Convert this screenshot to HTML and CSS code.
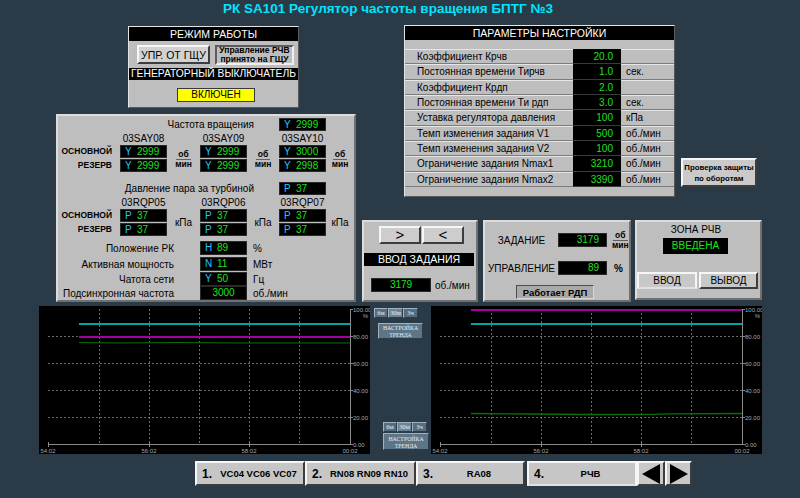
FILE: index.html
```html
<!DOCTYPE html>
<html lang="ru">
<head>
<meta charset="utf-8">
<title>РК SA101</title>
<link rel="stylesheet" href="styles.css">
</head>
<body>
<div class="screen">
  <h1 class="title">РК SA101 Регулятор частоты вращения БПТГ №3</h1>

  <div class="top">
    <div class="left-col">
      <div class="panel bevel mode">
        <div class="hdr h1">РЕЖИМ РАБОТЫ</div>
        <div class="mode-btns">
          <div class="btn raised upr">УПР. ОТ ГЩУ</div>
          <div class="btn sunken ctrl">Управление РЧВ<br>принято на ГЩУ</div>
        </div>
        <div class="hdr h2">ГЕНЕРАТОРНЫЙ ВЫКЛЮЧАТЕЛЬ</div>
        <div class="breaker"><div class="yellow">ВКЛЮЧЕН</div></div>
      </div>

      <div class="panel bevel2 meas">
        <div class="mrow r-title"><div class="t-lbl">Частота вращения</div><div class="val w47"><i>Y</i>2999</div></div>
        <div class="mrow hrow"><span class="c-lbl"></span><span class="c-box">03SAY08</span><span class="c-u1"></span><span class="c-box">03SAY09</span><span class="c-u2"></span><span class="c-box">03SAY10</span></div>
        <div class="mrow grp">
          <div class="c-lbl stack lbls"><span>ОСНОВНОЙ</span><span>РЕЗЕРВ</span></div>
          <div class="c-box stack"><div class="val"><i>Y</i>2999</div><div class="val"><i>Y</i>2999</div></div>
          <div class="c-u1 unit"><span class="frac"><span class="fn">об</span><span>мин</span></span></div>
          <div class="c-box stack"><div class="val"><i>Y</i>2999</div><div class="val"><i>Y</i>2999</div></div>
          <div class="c-u2 unit"><span class="frac"><span class="fn">об</span><span>мин</span></span></div>
          <div class="c-box stack"><div class="val"><i>Y</i>3000</div><div class="val"><i>Y</i>2998</div></div>
          <div class="c-u3 unit"><span class="frac"><span class="fn">об</span><span>мин</span></span></div>
        </div>
        <div class="mrow r-title r-press"><div class="t-lbl">Давление пара за турбиной</div><div class="val w47"><i>P</i>37</div></div>
        <div class="mrow hrow"><span class="c-lbl"></span><span class="c-box">03RQP05</span><span class="c-u1"></span><span class="c-box">03RQP06</span><span class="c-u2"></span><span class="c-box">03RQP07</span></div>
        <div class="mrow grp">
          <div class="c-lbl stack lbls"><span>ОСНОВНОЙ</span><span>РЕЗЕРВ</span></div>
          <div class="c-box stack"><div class="val"><i>P</i>37</div><div class="val"><i>P</i>37</div></div>
          <div class="c-u1 unit">кПа</div>
          <div class="c-box stack"><div class="val"><i>P</i>37</div><div class="val"><i>P</i>37</div></div>
          <div class="c-u2 unit">кПа</div>
          <div class="c-box stack"><div class="val"><i>P</i>37</div><div class="val"><i>P</i>37</div></div>
          <div class="c-u3 unit">кПа</div>
        </div>
        <div class="mrow srow s1"><div class="s-lbl">Положение РК</div><div class="val w47 tall"><i>H</i>89</div><div class="s-unit">%</div></div>
        <div class="mrow srow s2"><div class="s-lbl">Активная мощность</div><div class="val w47 tall"><i>N</i>11</div><div class="s-unit">МВт</div></div>
        <div class="mrow srow s3"><div class="s-lbl">Чатота сети</div><div class="val w47 tall"><i>Y</i>50</div><div class="s-unit">Гц</div></div>
        <div class="mrow srow s4"><div class="s-lbl">Подсинхронная частота</div><div class="val w47 tall center">3000</div><div class="s-unit">об./мин</div></div>
      </div>
    </div>

    <div class="right-col">
      <div class="params-row">
        <div class="panel bevel params">
          <div class="hdr ph">ПАРАМЕТРЫ НАСТРОЙКИ</div>
          <div class="p-gap"></div>
          <div class="prow"><div class="pl">Коэффициент Крчв</div><div class="pv">20.0</div><div class="pu"></div></div>
          <div class="prow"><div class="pl">Постоянная времени Тирчв</div><div class="pv">1.0</div><div class="pu">сек.</div></div>
          <div class="prow"><div class="pl">Коэффициент Крдп</div><div class="pv">2.0</div><div class="pu"></div></div>
          <div class="prow"><div class="pl">Постоянная времени Ти рдп</div><div class="pv">3.0</div><div class="pu">сек.</div></div>
          <div class="prow"><div class="pl">Уставка регулятора давления</div><div class="pv">100</div><div class="pu">кПа</div></div>
          <div class="prow"><div class="pl">Темп изменения задания V1</div><div class="pv">500</div><div class="pu">об./мин</div></div>
          <div class="prow"><div class="pl">Темп изменения задания V2</div><div class="pv">100</div><div class="pu">об./мин</div></div>
          <div class="prow"><div class="pl">Ограничение задания Nmax1</div><div class="pv">3210</div><div class="pu">об./мин</div></div>
          <div class="prow"><div class="pl">Ограничение задания Nmax2</div><div class="pv">3390</div><div class="pu">об./мин</div></div>
        </div>
        <div class="btn raised check">Проверка защиты<br>по оборотам</div>
      </div>

      <div class="ctrl-row">
        <div class="panel bevel2 p4">
          <div class="arrows">
            <div class="btn raised arr">&gt;</div>
            <div class="btn raised arr">&lt;</div>
          </div>
          <div class="hdr bar">ВВОД ЗАДАНИЯ</div>
          <div class="vrow"><div class="val center w60 tall">3179</div><span class="vunit">об./мин</span></div>
        </div>

        <div class="panel bevel2 p5">
          <div class="zrow z1"><div class="z-lbl">ЗАДАНИЕ</div><div class="val right w49 tall">3179</div><span class="frac zf"><span class="fn">об</span><span>мин</span></span></div>
          <div class="zrow z2"><div class="z-lbl">УПРАВЛЕНИЕ</div><div class="val right w49 tall">89</div><span class="pct">%</span></div>
          <div class="btn rdp">Работает РДП</div>
        </div>

        <div class="panel bevel2 p6">
          <div class="zone-t">ЗОНА РЧВ</div>
          <div class="zone-v">ВВЕДЕНА</div>
          <div class="zone-btns">
            <div class="btn lit zb1">ВВОД</div>
            <div class="btn raised zb2">ВЫВОД</div>
          </div>
        </div>
      </div>
    </div>
  </div>

  <div class="trends">
    <div class="chart">
      <svg width="331" height="148" viewBox="0 0 331 148">
        <rect width="331" height="148" fill="#000"/>
        <g stroke="#6a6a6a" stroke-width="1" stroke-dasharray="2 2">
          <line x1="60.5" y1="3" x2="60.5" y2="138"/><line x1="110.5" y1="3" x2="110.5" y2="138"/>
          <line x1="160.5" y1="3" x2="160.5" y2="138"/><line x1="210.5" y1="3" x2="210.5" y2="138"/>
          <line x1="260.5" y1="3" x2="260.5" y2="138"/>
          <line x1="9" y1="30.5" x2="311" y2="30.5"/><line x1="9" y1="57.5" x2="311" y2="57.5"/>
          <line x1="9" y1="84.5" x2="311" y2="84.5"/><line x1="9" y1="111.5" x2="311" y2="111.5"/>
        </g>
        <g stroke="#8a8a8a" stroke-width="1">
          <line x1="311.5" y1="3" x2="311.5" y2="138.5"/><line x1="9" y1="138.5" x2="312" y2="138.5"/>
          <line x1="311" y1="3.5" x2="314" y2="3.5"/><line x1="311" y1="30.5" x2="314" y2="30.5"/>
          <line x1="311" y1="57.5" x2="314" y2="57.5"/><line x1="311" y1="84.5" x2="314" y2="84.5"/>
          <line x1="311" y1="111.5" x2="314" y2="111.5"/><line x1="311" y1="138.5" x2="314" y2="138.5"/>
          <line x1="9.5" y1="136" x2="9.5" y2="141"/><line x1="110.5" y1="136" x2="110.5" y2="141"/>
          <line x1="210.5" y1="136" x2="210.5" y2="141"/>
        </g>
        <line x1="40" y1="18" x2="311" y2="18" stroke="#00a3a8" stroke-width="2"/>
        <line x1="40" y1="31" x2="311" y2="31" stroke="#a300a3" stroke-width="2"/>
        <polyline points="40,36.5 80,37 140,36.5 200,37 311,37" fill="none" stroke="#0a6f0a" stroke-width="1"/>
        <g class="ax" fill="#a8a8a8">
          <text x="314" y="5.5">100.00</text><text x="329" y="12" text-anchor="end">%</text>
          <text x="314" y="32.5">80.00</text><text x="314" y="59.5">60.00</text>
          <text x="314" y="86.5">40.00</text><text x="314" y="113.5">20.00</text>
          <text x="314" y="140.5">0.00</text>
          <text x="9" y="147" text-anchor="middle">54:02</text><text x="110" y="147" text-anchor="middle">56:02</text>
          <text x="210" y="147" text-anchor="middle">58:02</text><text x="311" y="147" text-anchor="middle">00:02</text>
        </g>
      </svg>
    </div>

    <div class="tools">
      <div class="tg1">
        <div class="tbtns"><span class="tb">6м</span><span class="tb tb-on">30м</span><span class="tb">3ч</span></div>
        <div class="tset">НАСТРОЙКА<br>ТРЕНДА</div>
      </div>
      <div class="tg2">
        <div class="tbtns"><span class="tb">6м</span><span class="tb tb-on">30м</span><span class="tb">3ч</span></div>
        <div class="tset tset2">НАСТРОЙКА<br>ТРЕНДА</div>
      </div>
    </div>

    <div class="chart">
      <svg width="331" height="148" viewBox="0 0 331 148">
        <rect width="331" height="148" fill="#000"/>
        <g stroke="#6a6a6a" stroke-width="1" stroke-dasharray="2 2">
          <line x1="60.5" y1="3" x2="60.5" y2="138"/><line x1="110.5" y1="3" x2="110.5" y2="138"/>
          <line x1="160.5" y1="3" x2="160.5" y2="138"/><line x1="210.5" y1="3" x2="210.5" y2="138"/>
          <line x1="260.5" y1="3" x2="260.5" y2="138"/>
          <line x1="9" y1="30.5" x2="311" y2="30.5"/><line x1="9" y1="57.5" x2="311" y2="57.5"/>
          <line x1="9" y1="84.5" x2="311" y2="84.5"/><line x1="9" y1="111.5" x2="311" y2="111.5"/>
        </g>
        <g stroke="#8a8a8a" stroke-width="1">
          <line x1="311.5" y1="3" x2="311.5" y2="138.5"/><line x1="9" y1="138.5" x2="312" y2="138.5"/>
          <line x1="311" y1="3.5" x2="314" y2="3.5"/><line x1="311" y1="30.5" x2="314" y2="30.5"/>
          <line x1="311" y1="57.5" x2="314" y2="57.5"/><line x1="311" y1="84.5" x2="314" y2="84.5"/>
          <line x1="311" y1="111.5" x2="314" y2="111.5"/><line x1="311" y1="138.5" x2="314" y2="138.5"/>
          <line x1="9.5" y1="136" x2="9.5" y2="141"/><line x1="110.5" y1="136" x2="110.5" y2="141"/>
          <line x1="210.5" y1="136" x2="210.5" y2="141"/>
        </g>
        <line x1="40" y1="4" x2="311" y2="4" stroke="#a300a3" stroke-width="2"/>
        <line x1="40" y1="18" x2="311" y2="18" stroke="#00a3a8" stroke-width="2"/>
        <polyline points="40,107.5 100,108 160,108.5 220,108.3 240,107.8 311,107.5" fill="none" stroke="#0a6f0a" stroke-width="1.3"/>
        <g class="ax" fill="#a8a8a8">
          <text x="314" y="5.5">100.00</text><text x="329" y="12" text-anchor="end">%</text>
          <text x="314" y="32.5">80.00</text><text x="314" y="59.5">60.00</text>
          <text x="314" y="86.5">40.00</text><text x="314" y="113.5">20.00</text>
          <text x="314" y="140.5">0.00</text>
          <text x="9" y="147" text-anchor="middle">54:02</text><text x="110" y="147" text-anchor="middle">56:02</text>
          <text x="210" y="147" text-anchor="middle">58:02</text><text x="311" y="147" text-anchor="middle">00:02</text>
        </g>
      </svg>
    </div>
  </div>

  <div class="nav">
    <div class="btn raised nb nb1"><b>1.</b><span>VC04 VC06 VC07</span></div>
    <div class="btn raised nb nb2"><b>2.</b><span>RN08 RN09 RN10</span></div>
    <div class="btn raised nb nb3"><b>3.</b><span>RA08</span></div>
    <div class="btn lit nb nb4"><b>4.</b><span>РЧВ</span></div>
    <div class="btn raised na"><svg width="18" height="20" viewBox="0 0 18 20"><polygon points="18,0 18,20 0,10" fill="#000"/></svg></div>
    <div class="btn raised na na2"><svg width="18" height="20" viewBox="0 0 18 20"><polygon points="0,0 0,20 18,10" fill="#000"/></svg></div>
  </div>
</div>
</body>
</html>
```

FILE: styles.css
```css
* { box-sizing: border-box; }
html, body { margin: 0; padding: 0; }
body {
  width: 800px; height: 498px; overflow: hidden;
  background: #2b3a47;
  font-family: "Liberation Sans", Arial, sans-serif;
  font-size: 10px; color: #000;
}
.title {
  margin: 0; width: 776px; height: 25px;
  text-align: center; font-size: 13.5px; font-weight: bold;
  line-height: 18px; color: #00e4ff;
}

/* ---------- top area ---------- */
.top { display: flex; gap: 6px; padding-left: 56px; height: 277px; }
.left-col { width: 300px; display: flex; flex-direction: column; }
.right-col { width: 400px; display: flex; flex-direction: column; }

.panel { background: #bebebe; }
.bevel { border: 1px solid; border-color: #e4e4e4 #5a5a5a #5a5a5a #e4e4e4; }
.bevel2 { border: 2px solid; border-color: #dcdcdc #707070 #707070 #dcdcdc; }

.hdr { background: #000; color: #fff; text-align: center; font-size: 10.5px; white-space: nowrap; }

.btn { display: flex; align-items: center; justify-content: center; text-align: center; }
.raised { background: #c8c8c8; border: 2px solid; border-color: #f6f6f6 #3c3c3c #3c3c3c #f6f6f6; }
.sunken { border: 2px solid; border-color: #5c5c5c #eeeeee #eeeeee #5c5c5c; }
.lit { background: #c8c8c8; border: 2px solid; border-color: #f6f6f6 #f6f6f6 #e0e0e0 #f6f6f6; }

/* mode panel */
.mode { margin: 1px 0 0 72px; width: 171px; height: 82px; }
.mode .h1 { height: 14px; line-height: 14px; }
.mode .h2 { height: 12px; line-height: 12px; font-size: 10.3px; }
.mode-btns { height: 27px; display: flex; align-items: center; padding-left: 8px; gap: 5px; }
.upr { width: 73px; height: 19px; font-size: 10.5px; background: #d2d2d2; }
.ctrl { width: 79px; height: 20px; font-size: 8.5px; font-weight: bold; line-height: 8.5px; }
.breaker { height: 27px; padding: 8px 0 0 48px; }
.yellow {
  width: 78px; height: 14px; background: #ffff00; border: 1px solid #3a3a3a;
  text-align: center; line-height: 12px; font-size: 10px;
}

/* measurement panel */
.meas { margin-top: 6px; width: 300px; height: 188px; display: flex; flex-direction: column; }
.mrow { display: flex; align-items: center; }
.r-title { margin-top: 2px; height: 13px; }
.r-press { margin-top: 10px; }
.t-lbl { width: 221px; text-align: right; padding-right: 25px; font-size: 10px; }
.hrow { height: 14px; font-size: 10px; }
.hrow span { text-align: center; }
.c-lbl { width: 62px; flex: none; }
.c-box { width: 47px; flex: none; }
.c-u1 { width: 33px; flex: none; }
.c-u2 { width: 32px; flex: none; }
.c-u3 { width: 28px; flex: none; }
.grp { height: 27px; align-items: stretch; }
.stack { display: flex; flex-direction: column; gap: 1px; }
.stack > * { height: 13px; }
.lbls span { text-align: right; padding-right: 8px; font-size: 8.5px; font-weight: bold; line-height: 13px; }
.unit { display: flex; align-items: center; justify-content: center; font-size: 10px; }
.frac { display: inline-flex; flex-direction: column; align-items: center; font-size: 8.5px; font-weight: bold; line-height: 8px; }
.frac .fn { border-bottom: 1px solid #606060; padding: 0 2px 1px; }

.val {
  background: #000; border: 1px solid #2a2a2a;
  height: 13px; line-height: 11px; font-size: 10px;
  color: #1fe01f; white-space: nowrap;
}
.val i { display: inline-block; width: 16px; padding-left: 4px; font-style: normal; color: #1cc8ff; }
.val.tall { height: 14px; line-height: 12px; }
.w47 { width: 47px; flex: none; }
.w49 { width: 49px; flex: none; }
.w60 { width: 60px; flex: none; }
.val.center { text-align: center; }
.val.right { text-align: right; padding-right: 7px; }

.srow { height: 14px; }
.s1 { margin-top: 5px; }
.s2 { margin-top: 2px; }
.s3 { margin-top: 1px; }
.s-lbl { width: 142px; text-align: right; padding-right: 26px; font-size: 10px; }
.s-unit { padding-left: 6px; font-size: 10px; }

/* params panel */
.params-row { display: flex; height: 172px; }
.params { margin-left: 42px; width: 271px; height: 172px; display: flex; flex-direction: column; }
.params .ph { height: 14px; line-height: 14px; }
.p-gap { height: 9px; }
.prow { height: 15.33px; display: flex; font-size: 10px; }
.pl, .pu { border-top: 1px solid #e6e6e6; border-bottom: 1px solid #7c7c7c; line-height: 13px; white-space: nowrap; }
.pl { width: 168px; padding-left: 12px; }
.pv {
  width: 48px; background: #000; color: #1fe01f; text-align: right;
  padding-right: 8px; line-height: 15px; border-bottom: 1px solid #3a3a3a;
}
.pu { flex: 1; padding-left: 5px; }
.check {
  margin: 133px 0 0 6px; width: 76px; height: 29px;
  font-size: 7.8px; font-weight: bold; line-height: 11px; white-space: nowrap;
  background: #cacaca;
}

/* control row */
.ctrl-row { display: flex; margin-top: 23px; height: 82px; }
.p4 { width: 116px; height: 82px; margin-right: 5px; }
.p5 { width: 148px; height: 82px; margin-right: 4px; }
.p6 { width: 127px; height: 80px; }

.arrows { display: flex; gap: 1px; padding: 4px 0 0 15px; }
.arr { width: 42px; height: 18px; font-size: 15px; line-height: 14px; background: #cdcdcd; }
.bar { margin: 9px 2px 0 0; height: 13px; line-height: 13px; }
.vrow { display: flex; align-items: center; margin-top: 12px; padding-left: 7px; }
.vunit { margin-left: 4px; font-size: 10px; }

.zrow { display: flex; align-items: center; }
.z1 { margin-top: 9px; }
.z2 { margin-top: 12px; }
.z-lbl { width: 73px; text-align: center; font-size: 10px; white-space: nowrap; }
.zf { margin-left: 5px; }
.pct { margin-left: 7px; font-size: 10px; font-weight: bold; }
.rdp {
  margin: 10px 0 0 31px; width: 78px; height: 14px;
  background: #a9a9a9; border: 1px solid; border-color: #4c4c4c #d8d8d8 #d8d8d8 #4c4c4c;
  font-size: 9.5px; font-weight: bold;
}

.zone-t { height: 16px; line-height: 16px; text-align: center; padding-right: 5px; font-size: 10px; }
.zone-v {
  margin-left: 26px; width: 65px; height: 16px; background: #000;
  color: #1fe01f; text-align: center; line-height: 16px; font-size: 10px;
}
.zone-btns { display: flex; gap: 2px; margin-top: 18px; }
.zb1 { width: 60px; height: 17px; font-size: 10px; }
.zb2 { width: 59px; height: 17px; font-size: 10px; }

/* ---------- trends ---------- */
.trends { display: flex; margin-top: 4px; height: 148px; padding-left: 39px; }
.chart { width: 331px; height: 148px; }
.chart svg { display: block; }
.ax text { font-family: "Liberation Sans", Arial, sans-serif; font-size: 6px; }
.tools {
  width: 61px; display: flex; flex-direction: column;
  justify-content: space-between; padding: 2px 0 4px 0;
}
.tbtns { display: flex; }
.tb {
  width: 15px; height: 10px; background: #566d80;
  border: 1px solid; border-color: #9fb2c2 #2c3c48 #2c3c48 #9fb2c2;
  color: #e8eef2; font-family: "Liberation Serif", serif; font-size: 6.5px;
  line-height: 8px; text-align: center;
}
.tb:first-child { width: 14px; }
.tb-on { background: #6c8396; }
.tg1 { padding-left: 4px; }
.tg2 { padding-left: 13px; }
.tset {
  width: 45px; height: 16px; margin: 5px 0 0 4px;
  background: #5e7588; border: 1px solid; border-color: #9fb2c2 #2c3c48 #2c3c48 #9fb2c2;
  color: #e8eef2; font-family: "Liberation Serif", serif; font-size: 5.8px;
  line-height: 6.5px; text-align: center; padding-top: 1px;
}
.tset2 { width: 46px; height: 17px; margin: 1px 0 0 0; padding-top: 2px; }

/* ---------- nav ---------- */
.nav { display: flex; margin-top: 7px; padding-left: 195px; height: 25px; }
.nb { justify-content: flex-start; padding-left: 5px; height: 25px; background: #c6c6c6; }
.nb b { font-size: 12px; margin-right: 2px; }
.nb span { flex: 1; text-align: center; font-size: 9.5px; font-weight: bold; white-space: nowrap; }
.nb1 { width: 110px; }
.nb2 { width: 111px; }
.nb3 { width: 109px; }
.nb4 { width: 110px; margin-left: 2px; }
.na { width: 28px; height: 25px; padding: 0; }
.na2 { width: 27px; }
```
